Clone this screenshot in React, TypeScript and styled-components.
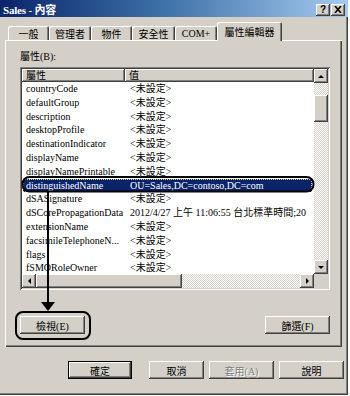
import React from 'react'
import styled, { createGlobalStyle, css } from 'styled-components'

const Global = createGlobalStyle`
  body {
    margin: 0;
    background: #fff;
    font-family: "Liberation Serif", "Noto Sans CJK TC", serif;
    color: #000;
  }
`

const raised = css`
  background: #d4d0c8;
  box-shadow: inset -1px -1px #404040, inset 1px 1px #fff, inset -2px -2px #808080, inset 2px 2px #d4d0c8;
`

const Window = styled.div`
  position: relative;
  width: 348px;
  height: 395px;
  box-sizing: border-box;
  background: #d4d0c8;
  box-shadow: inset -1px -1px #404040, inset -2px -2px #808080;
  display: flex;
  flex-direction: column;
`

const TitleBar = styled.div`
  height: 17px;
  flex: none;
  display: flex;
  align-items: center;
  padding: 0 3px 0 3px;
  background: linear-gradient(90deg, #0a246a 0%, #3a6ea5 45%, #a6caf0 100%);
`

const Title = styled.span`
  color: #fff;
  font-weight: bold;
  font-size: 11px;
  letter-spacing: -0.2px;
`

const TitleButtons = styled.div`
  margin-left: auto;
  display: flex;
  gap: 1px;
  padding-top: 2px;
`

const TitleButton = styled.div`
  ${raised};
  width: 14px;
  height: 12px;
  display: flex;
  align-items: center;
  justify-content: center;
  font-family: "Liberation Sans", sans-serif;
  font-weight: bold;
  font-size: 10px;
`

const Body = styled.div`
  flex: 1;
  display: flex;
  flex-direction: column;
  padding: 0 4px 0 5px;
`

const TabStrip = styled.div`
  display: flex;
  align-items: flex-end;
  height: 18px;
  margin-top: 5px;
  padding-left: 3px;
`

const Tab = styled.div<{ $w: number; $active?: boolean }>`
  width: ${p => p.$w}px;
  height: ${p => (p.$active ? 19 : 14)}px;
  margin-bottom: ${p => (p.$active ? -1 : 0)}px;
  position: relative;
  z-index: ${p => (p.$active ? 1 : 0)};
  box-sizing: border-box;
  background: #d4d0c8;
  border-radius: 2px 2px 0 0;
  box-shadow: inset 1px 1px #fff, inset -1px 0 #404040, inset -2px 0 #808080;
  display: flex;
  align-items: center;
  justify-content: center;
  font-size: 10px;
  padding-top: ${p => (p.$active ? 0 : 1)}px;
`

const Panel = styled.div`
  width: 337px;
  height: 307px;
  box-sizing: border-box;
  padding: 11px 12px 0 15px;
  box-shadow: inset 1px 1px #fff, inset -1px -1px #404040, inset -2px -2px #808080;
  display: flex;
  flex-direction: column;
`

const Label = styled.div`
  font-size: 10px;
  line-height: 12px;
  height: 12px;
`

const ListBox = styled.div`
  margin-top: 4px;
  width: 310px;
  height: 223px;
  box-sizing: border-box;
  padding: 2px;
  background: #fff;
  box-shadow: inset 1px 1px #808080, inset -1px -1px #fff, inset 2px 2px #404040, inset -2px -2px #d4d0c8;
  display: grid;
  grid-template-columns: 1fr 14px;
  grid-template-rows: 1fr 14px;
`

const ListContent = styled.div`
  overflow: hidden;
  font-size: 10px;
`

const Header = styled.div`
  display: flex;
  height: 13px;
`

const HeaderCell = styled.div<{ $w?: number }>`
  ${raised};
  box-shadow: inset -1px -1px #404040, inset 1px 1px #fff, inset -2px -2px #808080;
  ${p => (p.$w ? `width: ${p.$w}px;` : 'flex: 1;')}
  height: 13px;
  box-sizing: border-box;
  padding-left: 4px;
  line-height: 13px;
  font-size: 10px;
`

const Row = styled.div<{ $selected?: boolean }>`
  display: flex;
  height: 13.8px;
  line-height: 13.8px;
  white-space: nowrap;
  margin-left: 1px;
  margin-right: 2px;
  background: ${p => (p.$selected ? '#0a246a' : 'transparent')};
  color: ${p => (p.$selected ? '#fff' : '#000')};
  outline: ${p => (p.$selected ? '1px dotted #d8d080' : 'none')};
  outline-offset: -1px;
`

const NameCell = styled.div`
  width: 102px;
  flex: none;
  padding-left: 3px;
  box-sizing: border-box;
  overflow: visible;
`

const ValueCell = styled.div`
  padding-left: 5px;
  overflow: hidden;
`

const Track = styled.div<{ $vertical?: boolean }>`
  display: flex;
  flex-direction: ${p => (p.$vertical ? 'column' : 'row')};
  background: repeating-conic-gradient(#fff 0 25%, #d4d0c8 0 50%) 0 0 / 2px 2px;
`

const ArrowButton = styled.div`
  ${raised};
  width: 14px;
  height: 14px;
  flex: none;
  display: flex;
  align-items: center;
  justify-content: center;
`

const Triangle = styled.div<{ $dir: 'up' | 'down' | 'left' | 'right' }>`
  width: 0;
  height: 0;
  ${p =>
    p.$dir === 'up'
      ? 'border-left: 3px solid transparent; border-right: 3px solid transparent; border-bottom: 3px solid #000;'
      : p.$dir === 'down'
      ? 'border-left: 3px solid transparent; border-right: 3px solid transparent; border-top: 3px solid #000;'
      : p.$dir === 'left'
      ? 'border-top: 3px solid transparent; border-bottom: 3px solid transparent; border-right: 3px solid #000;'
      : 'border-top: 3px solid transparent; border-bottom: 3px solid transparent; border-left: 3px solid #000;'}
`

const Thumb = styled.div<{ $w: number; $h: number; $offset?: number }>`
  ${raised};
  flex: none;
  width: ${p => p.$w}px;
  height: ${p => p.$h}px;
  margin-top: ${p => p.$offset ?? 0}px;
`

const Spacer = styled.div`
  flex: 1;
`

const Corner = styled.div`
  background: #d4d0c8;
`

const PanelButtons = styled.div`
  width: 310px;
  margin-top: 26px;
  display: flex;
  justify-content: space-between;
`

const Button = styled.div<{ $w?: number; $default?: boolean; $disabled?: boolean; $gap?: number }>`
  ${raised};
  width: ${p => p.$w ?? 65}px;
  height: 18px;
  margin-left: ${p => p.$gap ?? 0}px;
  box-sizing: border-box;
  display: flex;
  align-items: center;
  justify-content: center;
  font-size: 10px;
  color: ${p => (p.$disabled ? '#808080' : '#000')};
  text-shadow: ${p => (p.$disabled ? '1px 1px #fff' : 'none')};
  ${p =>
    p.$default &&
    'box-shadow: inset 0 0 0 1px #000, inset -2px -2px #404040, inset 2px 2px #fff, inset -3px -3px #808080;'}
`

const DialogButtons = styled.div`
  margin-top: 14px;
  display: flex;
  justify-content: flex-end;
`

const Annotation = styled.svg`
  position: absolute;
  left: 0;
  top: 0;
  pointer-events: none;
`

const NOT_SET = '<未設定>'

const rows: { name: string; value: string; selected?: boolean }[] = [
  { name: 'countryCode', value: NOT_SET },
  { name: 'defaultGroup', value: NOT_SET },
  { name: 'description', value: NOT_SET },
  { name: 'desktopProfile', value: NOT_SET },
  { name: 'destinationIndicator', value: NOT_SET },
  { name: 'displayName', value: NOT_SET },
  { name: 'displayNamePrintable', value: NOT_SET },
  { name: 'distinguishedName', value: 'OU=Sales,DC=contoso,DC=com', selected: true },
  { name: 'dSASignature', value: NOT_SET },
  { name: 'dSCorePropagationData', value: '2012/4/27 上午 11:06:55 台北標準時間;20' },
  { name: 'extensionName', value: NOT_SET },
  { name: 'facsimileTelephoneN...', value: NOT_SET },
  { name: 'flags', value: NOT_SET },
  { name: 'fSMORoleOwner', value: NOT_SET },
]

const tabs = [
  { label: '一般', w: 41 },
  { label: '管理者', w: 42 },
  { label: '物件', w: 41 },
  { label: '安全性', w: 43 },
  { label: 'COM+', w: 42 },
  { label: '屬性編輯器', w: 65, active: true },
]

export default function App() {
  return (
    <>
      <Global />
      <Window>
        <TitleBar>
          <Title>Sales - 內容</Title>
          <TitleButtons>
            <TitleButton>?</TitleButton>
            <TitleButton>
              <svg width="8" height="7" viewBox="0 0 8 7">
                <path d="M1 0 L7 7 M7 0 L1 7" stroke="#000" strokeWidth="1.6" />
              </svg>
            </TitleButton>
          </TitleButtons>
        </TitleBar>
        <Body>
          <TabStrip>
            {tabs.map(t => (
              <Tab key={t.label} $w={t.w} $active={t.active}>
                {t.label}
              </Tab>
            ))}
          </TabStrip>
          <Panel>
            <Label>屬性(B):</Label>
            <ListBox>
              <ListContent>
                <Header>
                  <HeaderCell $w={103}>屬性</HeaderCell>
                  <HeaderCell>值</HeaderCell>
                </Header>
                {rows.map(r => (
                  <Row key={r.name} $selected={r.selected}>
                    <NameCell>{r.name}</NameCell>
                    <ValueCell>{r.value}</ValueCell>
                  </Row>
                ))}
              </ListContent>
              <Track $vertical>
                <ArrowButton>
                  <Triangle $dir="up" />
                </ArrowButton>
                <Thumb $w={14} $h={27} $offset={12} />
                <Spacer />
                <ArrowButton>
                  <Triangle $dir="down" />
                </ArrowButton>
              </Track>
              <Track>
                <ArrowButton>
                  <Triangle $dir="left" />
                </ArrowButton>
                <Thumb $w={146} $h={14} />
                <Spacer />
                <ArrowButton>
                  <Triangle $dir="right" />
                </ArrowButton>
              </Track>
              <Corner />
            </ListBox>
            <PanelButtons>
              <Button>檢視(E)</Button>
              <Button>篩選(F)</Button>
            </PanelButtons>
          </Panel>
          <DialogButtons>
            <Button $w={64} $default>確定</Button>
            <Button $w={55} $gap={17}>取消</Button>
            <Button $w={65} $gap={5} $disabled>套用(A)</Button>
            <Button $w={65} $gap={5}>說明</Button>
          </DialogButtons>
        </Body>
        <Annotation width="348" height="395" viewBox="0 0 348 395">
          <rect x="22.5" y="177" width="291" height="14.5" rx="7" fill="none" stroke="#000" strokeWidth="2" />
          <line x1="48" y1="191" x2="48" y2="303" stroke="#000" strokeWidth="2" />
          <polygon points="41,302 55,302 48,311" fill="#000" />
          <rect x="16" y="312" width="74" height="27" rx="7" fill="none" stroke="#000" strokeWidth="2" />
        </Annotation>
      </Window>
    </>
  )
}
